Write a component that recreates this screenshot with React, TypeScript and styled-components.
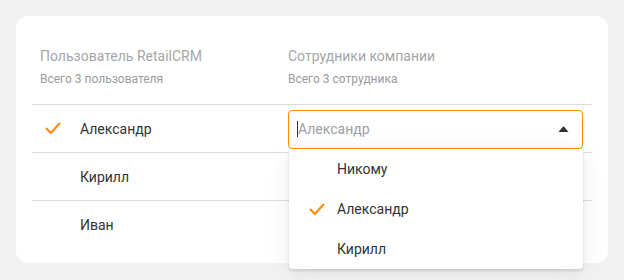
import React from 'react'
import styled, { createGlobalStyle } from 'styled-components'

const GlobalStyle = createGlobalStyle`
    html, body {
        margin: 0;
        background: #f1f2f1;
        font-family: Roboto, "Noto Sans", Arial, sans-serif;
    }
`

const Page = styled.div`
    padding: 16px;
    width: 624px;
    height: 280px;
    box-sizing: border-box;
`

const Card = styled.section`
    position: relative;
    background: #fff;
    border-radius: 12px;
    padding: 16px 16px 15px;
    width: 592px;
    box-sizing: border-box;
`

const Grid = styled.div`
    display: grid;
    grid-template-columns: 256px 304px;
`

const HeadCell = styled.div<{ $pad: number }>`
    padding: 14px 0 17px ${({ $pad }) => $pad}px;
    border-bottom: 1px solid #dcdcdc;
`

const Title = styled.div`
    font-size: 14px;
    line-height: 20px;
    color: #a6a6a6;
`

const Sub = styled.div`
    margin-top: 5px;
    font-size: 12px;
    line-height: 16px;
    color: #9b9b9b;
`

const Cell = styled.div<{ $last?: boolean }>`
    height: 47px;
    display: flex;
    align-items: center;
    border-bottom: ${({ $last }) => ($last ? 'none' : '1px solid #dcdcdc')};
`

const CheckSlot = styled.span`
    width: 48px;
    display: flex;
    padding-left: 13px;
    box-sizing: border-box;
`

const Name = styled.span`
    font-size: 14px;
    color: #333;
`

const Select = styled.div`
    width: 295px;
    height: 39px;
    box-sizing: border-box;
    border: 1px solid #ff8a00;
    border-radius: 4px;
    display: flex;
    align-items: center;
    padding: 0 13px 0 8px;
    margin-top: 1px;
`

const Caret = styled.span`
    width: 1px;
    height: 16px;
    background: #333;
`

const Placeholder = styled.span`
    flex: 1;
    font-size: 14px;
    color: #a0a0a0;
`

const Menu = styled.ul`
    position: absolute;
    left: 273px;
    top: 133px;
    width: 294px;
    margin: 0;
    padding: 0;
    list-style: none;
    background: #fff;
    border-radius: 4px;
    box-shadow: 0 2px 3px rgba(0, 0, 0, 0.12), 0 4px 24px rgba(0, 0, 0, 0.08);
`

const Item = styled.li`
    height: 40px;
    display: flex;
    align-items: center;
`

const ItemCheck = styled.span`
    width: 48px;
    display: flex;
    padding-left: 20px;
    box-sizing: border-box;
`

function Check() {
    return (
        <svg width="16" height="13" viewBox="0 0 16 13">
            <path d="M1.5 6.5 L5.8 11 L14.5 1.5" fill="none" stroke="#ff8a00" strokeWidth="2" strokeLinecap="round" strokeLinejoin="round" />
        </svg>
    )
}

const users = ['Александр', 'Кирилл', 'Иван']
const options = ['Никому', 'Александр', 'Кирилл']

export default function App() {
    return (
        <Page>
            <GlobalStyle />
            <Card>
                <Grid>
                    <HeadCell $pad={8}>
                        <Title>Пользователь RetailCRM</Title>
                        <Sub>Всего 3 пользователя</Sub>
                    </HeadCell>
                    <HeadCell $pad={0}>
                        <Title>Сотрудники компании</Title>
                        <Sub>Всего 3 сотрудника</Sub>
                    </HeadCell>
                    {users.map((u, i) => (
                        <React.Fragment key={u}>
                            <Cell $last={i === users.length - 1}>
                                <CheckSlot>{i === 0 && <Check />}</CheckSlot>
                                <Name>{u}</Name>
                            </Cell>
                            <Cell $last={i === users.length - 1}>
                                {i === 0 && (
                                    <Select>
                                        <Caret />
                                        <Placeholder>Александр</Placeholder>
                                        <svg width="11" height="7" viewBox="0 0 11 7">
                                            <path d="M4.6 1 Q5.5 0 6.4 1 L10.5 6 L0.5 6 Z" fill="#333" />
                                        </svg>
                                    </Select>
                                )}
                            </Cell>
                        </React.Fragment>
                    ))}
                </Grid>
                <Menu>
                    {options.map((o) => (
                        <Item key={o}>
                            <ItemCheck>{o === 'Александр' && <Check />}</ItemCheck>
                            <Name>{o}</Name>
                        </Item>
                    ))}
                </Menu>
            </Card>
        </Page>
    )
}
